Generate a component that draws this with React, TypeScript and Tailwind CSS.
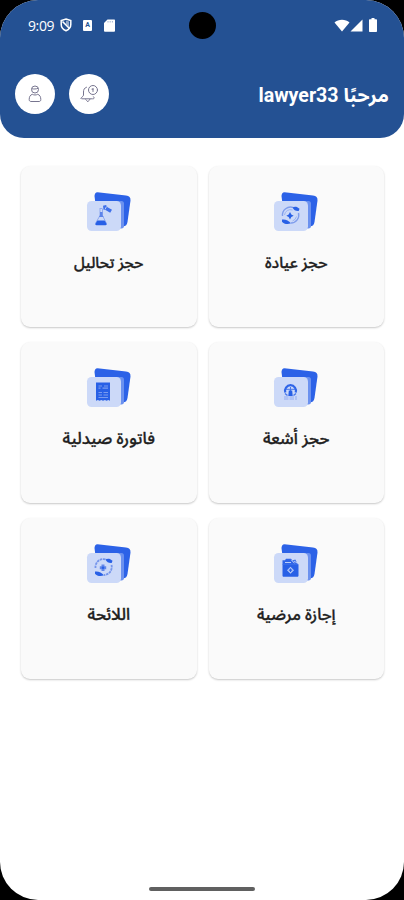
import type { ReactNode } from "react"

const FlaskIcon = () => (
  <g>
    <path d="M13.5 18.5h3M14 19v6.500l-4 7c-.4.9 0 1.500 1 1.500h8c1 0 1.400-.6 1-1.500L16.500 25.500V19" fill="none" stroke="#8fa9ef" strokeWidth="1" />
    <path d="M14 22h2.500v3l1 2h-4.500l1-2z" fill="#5d84ea" />
    <path d="M11.500 30.500h7l2 3c.5 1 0 1.700-1 1.700h-9c-1 0-1.500-.7-1-1.700z" fill="#2860e6" />
    <path d="M17 15.800l3-.8 1.500 2.200 4.500 2.600-1.800 3-4.700-2.800-2-.2z" fill="#3f70ea" />
    <path d="M20.500 16.500l-1.500 3" stroke="#c9d7f8" strokeWidth=".9" />
  </g>
)

const CareIcon = () => (
  <g>
    <path d="M9.500 26a8 8 0 0 1 11-8.300M25.500 23a8 8 0 0 1-7.500 10" fill="none" stroke="#7f9dec" strokeWidth="1.400" />
    <path d="M11.500 25a6 6 0 0 1 8-5M23.500 26.500a6.500 6.500 0 0 1-4 4.500" fill="none" stroke="#9bb3f1" strokeWidth="1" />
    <path d="M19.500 17.500c2-1.400 4.500-1.200 7 1.200l-.8 2.300c-3 .2-5-.8-6.200-3.500z" fill="#2860e6" />
    <path d="M9 29.500c3-.5 6.500.5 9 3.800-3.500 1.500-7 .8-9-1.500z" fill="#2860e6" />
    <path d="M17 22l1.300 2.400 2.400 1.300-2.400 1.300-1.300 2.400-1.300-2.400-2.400-1.300 2.400-1.300z" fill="#2860e6" />
  </g>
)

const ListIcon = () => (
  <g>
    <path d="M9.500 26a8 8 0 0 1 11-8.300M25.500 23a8 8 0 0 1-7.500 10" fill="none" stroke="#7595eb" strokeWidth="1.800" strokeDasharray="2.500 .7" />
    <path d="M19.500 17.500c2-1.400 4.500-1.200 7 1.200l-.8 2.300c-3 .2-5-.8-6.200-3.500z" fill="#2860e6" />
    <path d="M9 29.500c3-.5 6.500.5 9 3.800-3.500 1.500-7 .8-9-1.500z" fill="#2860e6" />
    <path d="M15.500 22.500h3v1.700h1.700v3h-1.700v1.700h-3v-1.700h-1.700v-3h1.700z" fill="#6287e9" />
    <circle cx="17" cy="25.700" r="1.300" fill="#2860e6" />
  </g>
)

const XrayIcon = () => (
  <g>
    <path d="M12.300 26.500a5.500 5.500 0 1 1 10.400 0" fill="none" stroke="#2f65e8" strokeWidth="2.200" />
    <path d="M13 23.300h9M17.500 21v4" fill="none" stroke="#4876ea" strokeWidth="1" />
    <path d="M15.800 24.500h3.400l.5 5.500h-4.400z" fill="#2860e6" />
    <path d="M12 27.500l2.500 2M23 27.500l-2.500 2" stroke="#4876ea" strokeWidth="1.400" />
    <path d="M11 31h13M11 33h13" fill="none" stroke="#91aaf0" strokeWidth="1" strokeDasharray="4.500 1" />
  </g>
)

const InvoiceIcon = () => (
  <g>
    <path d="M10 16.500h14v18.200l-1.700-.8-1.700.8-1.700-.8-1.900.8-1.700-.8-1.700.8-1.700-.8-1.900.8z" fill="#2860e6" />
    <path d="M12.500 20h3.500M18 20h4M12.500 22.200h2M16.500 22.200h5.500M12.500 26.500h3.500M17.500 26.500h4.500M12.500 29h3.500M17.500 29h4.500M12.500 31.500h9.500" fill="none" stroke="#7a9bef" strokeWidth="1.200" />
  </g>
)

const MedicalBagIcon = () => (
  <g>
    <path d="M9.500 22.300h16v11.200c0 .8-.5 1.300-1.300 1.300h-13.400c-.8 0-1.300-.5-1.300-1.300z" fill="#2860e6" />
    <path d="M9.500 22.800v-4.500h2.500l1-1.600h5l1.500 1.800 2.800-1 2.700 5.300z" fill="#2f65e8" />
    <path d="M18.300 17.800l3.200 3.500M12 20.500h6M21 19l3 2" fill="none" stroke="#ccd9f8" strokeWidth=".9" />
    <path d="M17.500 24.700l3.500 3.500-3.500 3.500-3.500-3.500z" fill="#b5c8f7" />
    <path d="M17.500 26.500v3.400M15.800 28.200h3.400" stroke="#2860e6" strokeWidth="1.200" />
  </g>
)

const services: { title: string; size: string; icon: ReactNode }[] = [
  { title: "حجز عيادة", size: "text-[15.5px]", icon: <CareIcon /> },
  { title: "حجز تحاليل", size: "text-[15.2px]", icon: <FlaskIcon /> },
  { title: "حجز أشعة", size: "text-[16.5px]", icon: <XrayIcon /> },
  { title: "فاتورة صيدلية", size: "text-[16.5px]", icon: <InvoiceIcon /> },
  { title: "إجازة مرضية", size: "text-[16px]", icon: <MedicalBagIcon /> },
  { title: "اللائحة", size: "text-[16.5px]", icon: <ListIcon /> },
]

const StatusBar = () => (
  <div dir="ltr" className="relative flex h-[50px] items-center justify-between pl-[28px] pr-[27px] text-white">
    <div className="flex items-center">
      <span className="w-[27px] whitespace-nowrap font-['Open_Sans',sans-serif] text-[14px] font-medium tracking-[-0.4px]">9:09</span>
      <svg className="ml-[5px]" width="12" height="14" viewBox="0 0 12 14" fill="none" stroke="currentColor">
        <path d="M6 1l4.800 1.500v4c0 3-1.800 5-4.800 6.300C3 11.500 1.200 9.500 1.200 6.500v-4z" strokeWidth="1.500" />
        <path d="M2.500 3.500l7 7" strokeWidth="1.600" />
        <path d="M6 2.500l3 1v5.500L6 6z" fill="currentColor" stroke="none" opacity=".5" />
      </svg>
      <div className="ml-[11px] flex h-[11px] w-[9px] items-center justify-center rounded-[1px] bg-white font-['Roboto',sans-serif] text-[7px] font-bold text-[#245193]">A</div>
      <svg className="ml-[12px]" width="11" height="13" viewBox="0 0 11 13" fill="currentColor">
        <path d="M3.500.5H10c.6 0 1 .4 1 1V12c0 .5-.4.8-1 .8H1c-.6 0-1-.3-1-.8V4z" />
        <path d="M4 2v1.500M6.200 2v1.500M8.400 2v1.500" stroke="#8aa2c7" strokeWidth=".8" />
      </svg>
    </div>
    <div className="absolute left-[189px] top-[12px] size-[27px] rounded-full bg-black" />
    <div className="flex items-center">
      <svg width="16" height="13" viewBox="0 0 16 13" fill="currentColor">
        <path d="M.5 3.500C4.500-.2 11.500-.2 15.500 3.500L8 12.500z" />
      </svg>
      <svg width="13" height="13" viewBox="0 0 13 13" fill="currentColor">
        <path d="M12.500.5v12H.5z" />
      </svg>
      <svg className="ml-[6px]" width="8" height="14" viewBox="0 0 8 14" fill="currentColor">
        <path d="M2.500 0h3v1.300H7c.6 0 1 .4 1 1V13c0 .6-.4 1-1 1H1c-.6 0-1-.4-1-1V2.300c0-.6.4-1 1-1h1.500z" />
      </svg>
    </div>
  </div>
)

const Header = () => (
  <header className="h-[138px] rounded-b-[24px] bg-[#245193]">
    <StatusBar />
    <div className="flex items-center justify-between px-[15px] pt-[24px]">
      <h1 className="whitespace-nowrap pt-[3px] font-['Roboto','Noto_Sans_Arabic','DejaVu_Sans',sans-serif] text-[19.6px] font-bold leading-[37px] text-white">
        مرحبًا lawyer33
      </h1>
      <div className="flex gap-[14px]">
        <button className="flex size-10 items-center justify-center rounded-full bg-white">
          <svg width="22" height="20" viewBox="0 0 22 20" fill="none" stroke="#77758f" strokeWidth="1" strokeLinecap="round">
            <path d="M8.500 3.200C6.200 4 5.500 5.800 5.500 8v3.200c0 1.300-2.700 2.200-2.700 3.300M4 14.800h10.500c2 0 2.300-1 .7-2.300" />
            <path d="M7.500 15.300c.8 1 1.700 1.200 2.300 2.500.8-1.300 1.600-1.500 2.200-2.500" />
            <circle cx="15" cy="6" r="4.500" />
            <path d="M15 4.500v3M14 5.200h1" />
          </svg>
        </button>
        <button className="flex size-10 items-center justify-center rounded-full bg-white">
          <svg width="14" height="18" viewBox="0 0 14 18" fill="none" stroke="#77758f" strokeWidth="1">
            <circle cx="7" cy="4.500" r="3.500" />
            <path d="M3.700 3.800c2 .3 4.500.3 6.600-.5" />
            <path d="M4.300 9.300C2 10 1.200 12 1.200 14.500c0 1.300.6 2 1.800 2h8c1.200 0 1.800-.7 1.800-2 0-2.500-.8-4.500-3.100-5.200-1.500.9-3.900.9-5.400 0z" />
          </svg>
        </button>
      </div>
    </div>
  </header>
)

const App = () => {
  return (
    <div className="h-[900px] w-[404px] overflow-hidden bg-black">
      <div dir="rtl" className="flex h-full flex-col overflow-hidden rounded-[38px] bg-white">
        <Header />
        <main className="grid grid-cols-2 gap-x-[12px] gap-y-[15px] pl-[21px] pr-[20px] pt-[28px]">
          {services.map((service) => (
            <div key={service.title} className="flex h-[161px] flex-col items-center rounded-[9px] bg-[#fafafa] pt-[24px] shadow-[0_1px_2px_rgba(0,0,0,0.22)]">
              <svg width="46" height="43" viewBox="0 0 46 43">
                <path d="M11.500 2.200L40 5.500c3.200.4 4.800 2 4.500 5L41.500 32c-.5 3-2 4.500-5 4.200L12 33 8.500 6c.2-2.500 1-3.800 3-3.800z" fill="#2c62e7" />
                <path d="M6 11h29.500c1.700 0 2.500 1 2.500 2.500V36c0 1.500-.8 2.500-2.500 2.500H30L8 11z" fill="#6b91ef" />
                <rect x="1" y="11" width="34" height="30" rx="4.500" fill="#ccd9f8" />
                {service.icon}
              </svg>
              <h2 className={`mt-[16px] whitespace-nowrap font-['Noto_Sans_Arabic','DejaVu_Sans',sans-serif] font-medium leading-[28px] text-[#202020] [-webkit-text-stroke:0.35px_#202020] ${service.size}`}>
                {service.title}
              </h2>
            </div>
          ))}
        </main>
        <div className="mx-auto mb-[9px] mt-auto h-[4px] w-[106px] rounded-full bg-[#606060]" />
      </div>
    </div>
  )
}

export default App
